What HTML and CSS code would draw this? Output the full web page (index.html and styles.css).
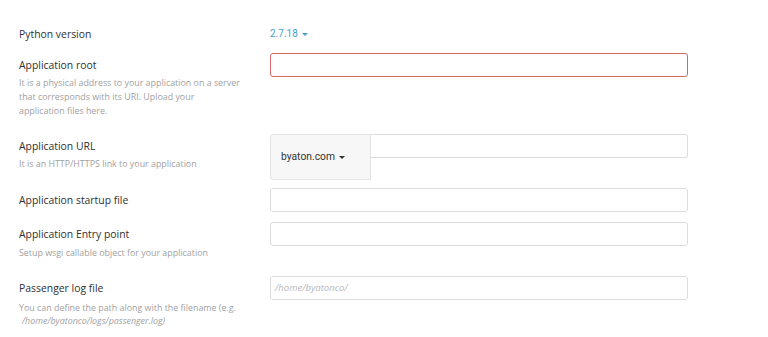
FILE: index.html
```html
<!DOCTYPE html>
<html lang="en">
<head>
<meta charset="utf-8">
<title>Python app setup</title>
<link rel="stylesheet" href="styles.css">
</head>
<body>
<div class="form">
  <div class="row row--python">
    <div class="info"><div class="label">Python version</div></div>
    <div class="control"><span class="version">2.7.18<span class="caret"></span></span></div>
  </div>

  <div class="row row--root">
    <div class="info">
      <div class="label">Application root</div>
      <div class="desc">It is a physical address to your application on a server<br>that corresponds with its URI. Upload your<br>application files here.</div>
    </div>
    <div class="control"><div class="input input--error"></div></div>
  </div>

  <div class="row row--url">
    <div class="info">
      <div class="label">Application URL</div>
      <div class="desc">It is an HTTP/HTTPS link to your application</div>
    </div>
    <div class="control url-group">
      <div class="addon">byaton.com<span class="caret caret--dark"></span></div>
      <div class="input input--url"></div>
    </div>
  </div>

  <div class="row row--startup">
    <div class="info"><div class="label">Application startup file</div></div>
    <div class="control"><div class="input"></div></div>
  </div>

  <div class="row row--entry">
    <div class="info">
      <div class="label">Application Entry point</div>
      <div class="desc desc--entry">Setup wsgi callable object for your application</div>
    </div>
    <div class="control"><div class="input"></div></div>
  </div>

  <div class="row row--log">
    <div class="info">
      <div class="label">Passenger log file</div>
      <div class="desc desc--log">You can define the path along with the filename (e.g.<br><em class="path">/home/byatonco/logs/passenger.log)</em></div>
    </div>
    <div class="control"><div class="input"><span class="placeholder">/home/byatonco/</span></div></div>
  </div>
</div>
</body>
</html>
```

FILE: styles.css
```css
body {
  margin: 0;
  background: #ffffff;
  font-family: "Open Sans", "Liberation Sans", sans-serif;
}

.form {
  padding: 26px 0 0 19px;
}

.row {
  display: flex;
  align-items: flex-start;
}

.row--root { margin-top: 11px; }
.row--url { margin-top: 16px; }
.row--startup { margin-top: 8px; }
.row--entry { margin-top: 10px; }
.row--log { margin-top: 16px; }

.info {
  width: 251px;
  flex: none;
}

.label {
  font-size: 10.4px;
  line-height: 16px;
  color: #303030;
}

.row + .row .label {
  padding-top: 4px;
}

.desc {
  margin-top: 3px;
  font-size: 8.9px;
  line-height: 14px;
  color: #9f9f9f;
}

.desc--entry { margin-top: 4px; }
.desc--log { margin-top: 5px; line-height: 13px; }

.path {
  padding-left: 3px;
}

.control {
  width: 418px;
  flex: none;
  font-size: 10px;
  line-height: 16px;
}

.version {
  display: flex;
  align-items: center;
  font-family: Roboto, "Liberation Sans", sans-serif;
  font-size: 10px;
  line-height: 16px;
  color: #4aa0c6;
}

.caret {
  display: inline-block;
  width: 0;
  height: 0;
  margin-left: 4px;
  border-top: 3px solid #4aa0c6;
  border-left: 3px solid transparent;
  border-right: 3px solid transparent;
}

.caret--dark {
  border-top-color: #333333;
}

.input {
  box-sizing: border-box;
  height: 24px;
  border: 1px solid #dcdcdc;
  border-radius: 3px;
  background: #ffffff;
  display: flex;
  align-items: center;
  padding-left: 4px;
}

.input--error {
  border-color: #d56a6a;
}

.url-group {
  display: flex;
  align-items: flex-start;
}

.addon {
  box-sizing: border-box;
  width: 101px;
  height: 46px;
  flex: none;
  display: flex;
  align-items: center;
  padding-left: 10px;
  background: #f7f7f7;
  border: 1px solid #e3e3e3;
  border-radius: 3px 0 0 3px;
  font-family: Roboto, "Liberation Sans", sans-serif;
  font-size: 10.3px;
  color: #333333;
}

.input--url {
  flex: 1;
  border-left: none;
  border-radius: 0 3px 3px 0;
}

.placeholder {
  font-style: italic;
  font-size: 9.5px;
  color: #b8b8b8;
}
```
